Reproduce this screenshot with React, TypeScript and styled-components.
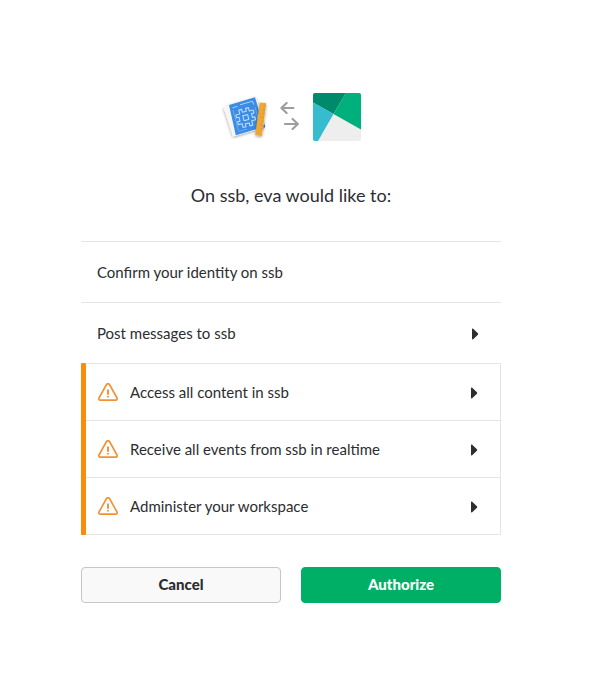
import React from 'react';
import styled, { createGlobalStyle } from 'styled-components';

const GlobalStyle = createGlobalStyle`
  * { box-sizing: border-box; }
  body {
    margin: 0;
    background: #fff;
    color: #2c2d30;
    font-family: Lato, 'Open Sans', sans-serif;
    font-size: 15px;
    line-height: 24px;
  }
`;

const Page = styled.main`
  display: flex;
  justify-content: center;
  padding: 93px 29px 64px 16px;
`;

const Consent = styled.form`
  width: 100%;
  max-width: 420px;
`;

const AppPair = styled.div`
  display: flex;
  justify-content: center;
  align-items: center;
`;

const ExchangeArrows = styled.svg`
  margin: 0 11px;
`;

const Heading = styled.h1`
  margin: 40px 0 31px;
  font-size: 18px;
  line-height: 29px;
  font-weight: 400;
  text-align: center;
`;

const ScopeList = styled.ul`
  list-style: none;
  margin: 0;
  padding: 0;
`;

const ScopeItem = styled.li`
  display: flex;
  align-items: center;
  height: 61px;
  padding: 2px 0 0 16px;
  border-top: 1px solid #e5e5e5;
`;

const ScopeToggle = styled.button<{ $warning?: boolean }>`
  display: flex;
  align-items: center;
  gap: 12px;
  flex: 1;
  height: 100%;
  padding: ${(p) => (p.$warning ? '0 22px 0 12px' : '0 22px 0 0')};
  border: 0;
  background: none;
  color: inherit;
  font: inherit;
  text-align: left;
  cursor: pointer;
`;

const ScopeLabel = styled.span`
  flex: 1;
  padding-bottom: 2px;
`;

const WarningList = styled(ScopeList)`
  border: 1px solid #e5e5e5;
  border-width: 0 1px 1px 0;
  position: relative;
  padding-left: 5px;

  &::before {
    content: '';
    position: absolute;
    inset: 0 auto -1px 0;
    width: 5px;
    border-radius: 1px;
    background: #fb8c0b;
  }
`;

const WarningItem = styled.li`
  display: flex;
  height: 57px;
  padding-top: 2px;
  border-top: 1px solid #e5e5e5;
`;

const Actions = styled.div`
  display: flex;
  gap: 20px;
  margin-top: 32px;
`;

const ActionButton = styled.button<{ $primary?: boolean }>`
  flex: 1;
  height: 36px;
  padding: 0 0 2px;
  border: 1px solid ${(p) => (p.$primary ? '#00af66' : '#c5c6c8')};
  border-radius: 4px;
  background: ${(p) => (p.$primary ? '#00af66' : '#f9f9f9')};
  color: ${(p) => (p.$primary ? '#fff' : '#2c2d30')};
  font: inherit;
  font-weight: 900;
  cursor: pointer;
`;

const BlueprintIcon = () => (
  <svg width="48" height="48" viewBox="0 0 48 48" aria-hidden="true">
    <defs>
      <filter id="cover-shadow" x="-40%" y="-20%" width="180%" height="140%">
        <feDropShadow dx="0" dy="1" stdDeviation="1.4" floodOpacity="0.4" />
      </filter>
    </defs>
    <path filter="url(#cover-shadow)" d="M2.5 14.5 9 11.5l26-7.5 8 30.5L13.8 43l-1.8.5z" fill="#f6f6f8" />
    <path d="M8 12 34 4.2 43 34 14.8 42.3z" fill="#3a8ce4" />
    <path d="m43 34 .3-4 .9 4-2 1.5z" fill="#2869c4" />
    <path d="m11.5 14.8 5-1.5M19 11.8l12.5-3.6 1.2 3.4" fill="none" stroke="#b4d8fa" strokeWidth=".9" />
    <path d="M34 14l4.5 16.5M12 17l5.5 20.5M17.5 38.5l8.5-2.4" fill="none" stroke="#7fb8f2" strokeWidth=".7" />
    <g transform="translate(24.8 24.6) rotate(-14)" fill="none" stroke="#b9dcfc" strokeWidth="1.1" strokeLinejoin="round">
      <path d="M-5-9h3v3h4v-3h3v3.5h4v3H6.5v4H9v3H5V9H2V6h-4v3h-3V5h-4V2h2.500v-4H-9v-3h4z" />
      <path d="M-2.500-2.500h5v5h-5z" />
    </g>
    <path filter="url(#cover-shadow)" d="m38.8 9.4 6.4.8-4.4 32.8-6.6-1z" fill="#efa633" />
    <path d="m44.500 13-1.500-.2m1 4-2.400-.3m1.800 4.200-1.500-.2m1 4-2.400-.3m1.800 4.200-1.500-.2m1 4-2.400-.3m1.800 4.200-1.500-.2" stroke="#c98a2c" strokeWidth=".7" />
  </svg>
);

const PrismIcon = () => (
  <svg width="48" height="48" viewBox="0 0 48 48" aria-hidden="true">
    <clipPath id="prism-clip">
      <rect width="48" height="48" rx="2" />
    </clipPath>
    <g clipPath="url(#prism-clip)">
      <path d="M0 0h48v48H0z" fill="#eee" />
      <path d="M0 0h33L20.5 21 0 9.5z" fill="#00896b" />
      <path d="M33 0h15v36.5L20.5 21z" fill="#00b07c" />
      <path d="M0 9.5 20.5 21 5 48H0z" fill="#35bdcf" />
    </g>
  </svg>
);

const WarningIcon = () => (
  <svg width="20" height="20" viewBox="0 0.6 20 20" fill="none" stroke="#f29132" strokeLinecap="round" strokeLinejoin="round" aria-hidden="true">
    <path d="M8.5 2.1 1 15.6c-.6 1.1.1 2.1 1.3 2.1h15.4c1.2 0 1.9-1 1.3-2.1L11.5 2.1c-.7-1.2-2.3-1.2-3 0z" strokeWidth="1.6" />
    <path d="M10 7.7v4M10 14.2v.1" strokeWidth="1.9" />
  </svg>
);

const Caret = () => (
  <svg width="7" height="12" viewBox="0 0 7 12" aria-hidden="true">
    <path d="M0 1.2C0 .4.7.3 1.2.8l4.7 4.4c.5.5.5 1.1 0 1.6l-4.7 4.4c-.5.5-1.2.4-1.2-.4z" fill="#2c2d30" />
  </svg>
);

const warnings = [
  'Access all content in ssb',
  'Receive all events from ssb in realtime',
  'Administer your workspace',
];

export default function App() {
  return (
    <>
      <GlobalStyle />
      <Page>
        <Consent onSubmit={(e: React.FormEvent) => e.preventDefault()}>
          <AppPair>
            <BlueprintIcon />
            <ExchangeArrows width="22" height="32" viewBox="-1 -3 22 32" fill="none" stroke="#9e9ea2" strokeWidth="2.2" strokeLinecap="round" strokeLinejoin="round" aria-hidden="true">
              <path d="M12.4 4H.8M5.6-1 .4 4l5.200 5M4 20h12.400M11.600 15l5.200 5-5.200 5" />
            </ExchangeArrows>
            <PrismIcon />
          </AppPair>
          <Heading>On ssb, eva would like to:</Heading>
          <ScopeList>
            <ScopeItem>
              <ScopeLabel>Confirm your identity on ssb</ScopeLabel>
            </ScopeItem>
            <ScopeItem>
              <ScopeToggle type="button" aria-expanded={false}>
                <ScopeLabel>Post messages to ssb</ScopeLabel>
                <Caret />
              </ScopeToggle>
            </ScopeItem>
          </ScopeList>
          <WarningList>
            {warnings.map((label) => (
              <WarningItem key={label}>
                <ScopeToggle type="button" $warning aria-expanded={false}>
                  <WarningIcon />
                  <ScopeLabel>{label}</ScopeLabel>
                  <Caret />
                </ScopeToggle>
              </WarningItem>
            ))}
          </WarningList>
          <Actions>
            <ActionButton type="button">Cancel</ActionButton>
            <ActionButton type="submit" $primary>Authorize</ActionButton>
          </Actions>
        </Consent>
      </Page>
    </>
  );
}
